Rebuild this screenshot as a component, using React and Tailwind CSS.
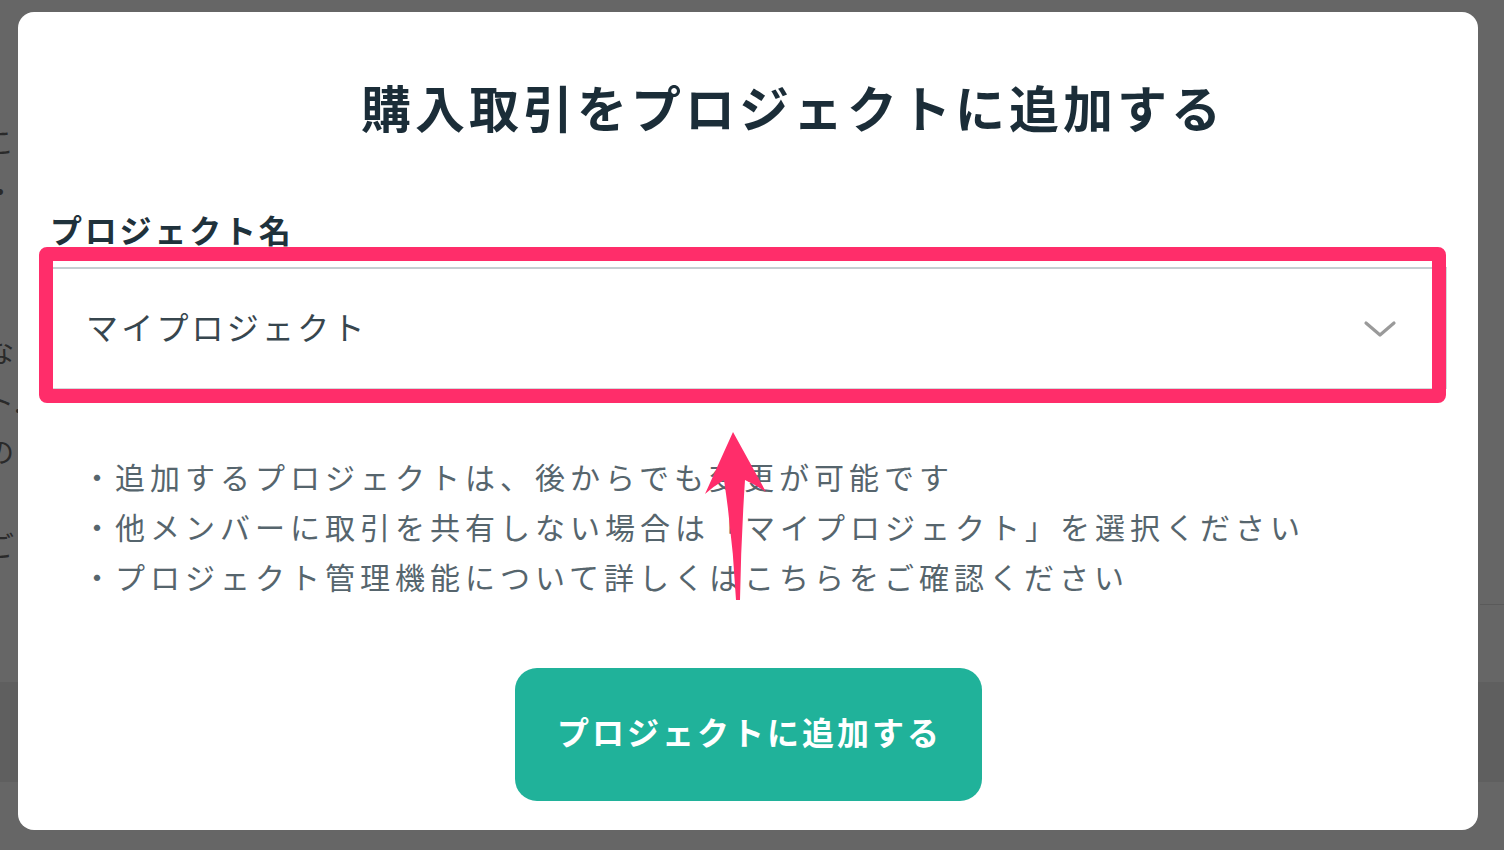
const jp = "font-['Noto_Sans_CJK_JP','Noto_Sans',sans-serif]";

const notes = [
  "追加するプロジェクトは、後からでも変更が可能です",
  "他メンバーに取引を共有しない場合は「マイプロジェクト」を選択ください",
  "プロジェクト管理機能について詳しくはこちらをご確認ください",
];

/* the pink arrow drawn over the notes */
function Arrow() {
  return (
    <svg
      className="absolute left-[682px] top-[413px] h-[180px] w-[70px]"
      viewBox="0 0 70 180"
    >
      <path
        d="M33 7 L66 67 Q56 60 45 55 Q41 115 40 175 L36 175 Q33 115 24 55 Q14 61 5 69 Z"
        fill="#ff2d6a"
      />
    </svg>
  );
}

function Chevron() {
  return (
    <svg className="h-[20px] w-[34px]" viewBox="0 0 34 20">
      <polyline
        points="3,4 17,16 31,4"
        fill="none"
        stroke="#9a9a9a"
        strokeWidth="3.2"
        strokeLinecap="round"
        strokeLinejoin="round"
      />
    </svg>
  );
}

export default function App() {
  return (
    <div className={`relative h-[850px] w-[1504px] overflow-hidden bg-[#666666] ${jp}`}>
      {/* page behind the overlay */}
      <div className="flex h-full w-[1504px] flex-col">
        <div className="ml-[-14px] flex flex-col pt-[116px] text-[28px] leading-[50px] text-[#2a2a2a]">
          <span>こ</span>
          <span>・・</span>
          <span className="mt-[110px]">な</span>
          <span>ト.</span>
          <span>の</span>
          <span className="mt-[44px]">ご</span>
        </div>
        <div className="mt-auto mb-[68px] h-[100px] w-full bg-[#5f5f5f]" />
      </div>

      {/* modal */}
      <div className="absolute left-[18px] top-[12px] flex h-[818px] w-[1460px] flex-col rounded-[16px] bg-white">
        <h1 className="mt-[66px] pl-[90px] text-center text-[50px] font-bold leading-[56px] tracking-[4px] text-[#1b2d38]">
          購入取引をプロジェクトに追加する
        </h1>

        <label className="ml-[32px] mt-[75px] text-[32px] font-bold leading-[40px] tracking-[2.8px] text-[#1f323c]">
          プロジェクト名
        </label>

        <div className="relative ml-[32px] mt-[18px] w-[1397px]">
          <div className="flex h-[122px] items-center justify-between border border-[#d3d9dc] border-t-2 border-t-[#c5ced2] pl-[35px] pr-[49px]">
            <span className="pb-[5px] text-[32px] leading-[40px] tracking-[3.2px] text-[#37464e]">
              マイプロジェクト
            </span>
            <Chevron />
          </div>
          {/* highlight annotation */}
          <div className="absolute left-[-11px] top-[-20px] h-[156px] w-[1407px] rounded-[8px] border-[14px] border-[#ff2d6a]" />
        </div>

        <ul className="ml-[64px] mt-[62px] flex flex-col text-[30px] leading-[50px] text-[#56656d]">
          {notes.map((n) => (
            <li key={n} className="flex">
              <span className="w-[33px] tracking-normal">・</span>
              <span className="tracking-[5px]">{n}</span>
            </li>
          ))}
        </ul>

        <button className="mx-auto mt-[67px] flex h-[133px] w-[467px] items-center justify-center rounded-[22px] bg-[#20b29a] pb-[8px] pl-[3px] text-[32px] font-bold tracking-[3px] text-white">
          プロジェクトに追加する
        </button>

        <Arrow />
      </div>

      {/* right gutter line */}
      <div className="absolute left-[1480px] top-[604px] h-[1px] w-[24px] bg-[#5a5a5a]" />
    </div>
  );
}
